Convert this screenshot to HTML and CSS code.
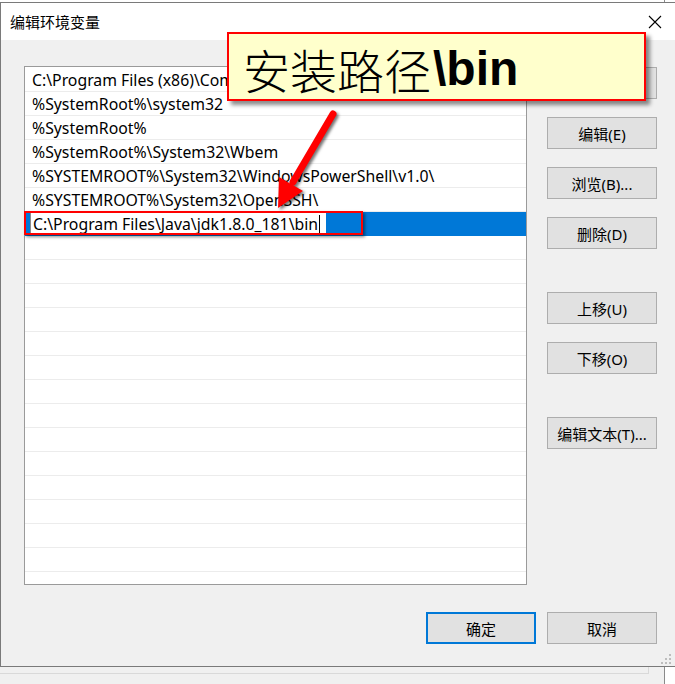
FILE: index.html
```html
<!DOCTYPE html>
<html lang="zh-CN">
<head>
<meta charset="utf-8">
<title>编辑环境变量</title>
<link rel="stylesheet" href="styles.css">
</head>
<body>
<div class="screen">
  <div class="topstrip"><div class="topstrip-gap"></div><div class="topstrip-line"></div></div>
  <div class="dialog">
    <div class="titlebar">
      <span class="title">编辑环境变量</span>
      <svg class="close" width="14" height="14" viewBox="0 0 14 14"><path d="M1 1 L13 13 M13 1 L1 13" stroke="#000" stroke-width="1.1" fill="none"/></svg>
    </div>
    <div class="body">
      <div class="main">
        <div class="list">
          <div class="row">C:\Program Files (x86)\Common Files\Oracle\Java\javapath</div>
          <div class="row">%SystemRoot%\system32</div>
          <div class="row">%SystemRoot%</div>
          <div class="row">%SystemRoot%\System32\Wbem</div>
          <div class="row">%SYSTEMROOT%\System32\WindowsPowerShell\v1.0\</div>
          <div class="row">%SYSTEMROOT%\System32\OpenSSH\</div>
          <div class="row selected"><div class="editbox"><span class="edittext">C:\Program Files\Java\jdk1.8.0_181\bin</span><span class="caret"></span></div></div>
          <div class="row"></div><div class="row"></div><div class="row"></div><div class="row"></div>
          <div class="row"></div><div class="row"></div><div class="row"></div><div class="row"></div>
          <div class="row"></div><div class="row"></div><div class="row"></div><div class="row"></div>
          <div class="row"></div><div class="row"></div><div class="row"></div>
        </div>
        <div class="side">
          <div class="btn">新建(N)</div>
          <div class="btn">编辑(E)</div>
          <div class="btn">浏览(B)...</div>
          <div class="btn">删除(D)</div>
          <div class="btn spaced">上移(U)</div>
          <div class="btn">下移(O)</div>
          <div class="btn spaced">编辑文本(T)...</div>
        </div>
      </div>
      <div class="footer">
        <div class="btn default">确定</div>
        <div class="btn">取消</div>
      </div>
    </div>
    <svg class="grip" width="12" height="12" viewBox="0 0 12 12">
      <rect x="9" y="0" width="2" height="2" fill="#bdbdbd"/>
      <rect x="5" y="4" width="2" height="2" fill="#bdbdbd"/>
      <rect x="9" y="4" width="2" height="2" fill="#bdbdbd"/>
      <rect x="1" y="8" width="2" height="2" fill="#bdbdbd"/>
      <rect x="5" y="8" width="2" height="2" fill="#bdbdbd"/>
      <rect x="9" y="8" width="2" height="2" fill="#bdbdbd"/>
    </svg>
  </div>
  <div class="below">
    <div class="below-left"><div class="below-inner"></div></div>
    <div class="below-line"></div>
    <div class="below-white"></div>
  </div>

  <div class="callout"><span class="callout-cjk">安装路径</span><span class="callout-latin">\bin</span></div>
  <div class="editmark"></div>
  <svg class="arrow" width="100" height="120" viewBox="260 100 100 120">
    <g class="arrow-g">
      <line x1="333" y1="114" x2="293" y2="182" stroke="#ff0000" stroke-width="7" stroke-linecap="round"/>
      <polygon points="278,208 279,177 303,191" fill="#ff0000"/>
    </g>
  </svg>
</div>
</body>
</html>
```

FILE: styles.css
```css
* { box-sizing: border-box; }
html, body { margin: 0; padding: 0; }
body {
  background: #f0f0f0;
  font-family: "Noto Sans", "Noto Sans CJK SC", sans-serif;
  font-size: 15px;
  color: #000;
}
.screen {
  position: relative;
  width: 675px;
  height: 684px;
  overflow: hidden;
  background: #f0f0f0;
}
.topstrip {
  display: flex;
  height: 2px;
  background: #fff;
}
.topstrip-gap { width: 664px; }
.topstrip-line { width: 1px; background: #8a8a8a; }

.dialog {
  position: relative;
  width: 675px;
  height: 665px;
  border-top: 1px solid #7a7a7a;
  border-left: 1px solid #7a7a7a;
  border-bottom: 1px solid #7a7a7a;
  display: flex;
  flex-direction: column;
}
.titlebar {
  height: 37px;
  background: #fff;
  display: flex;
  align-items: center;
  justify-content: space-between;
  padding: 0 13px 0 9px;
}
.title {
  font-family: "Noto Sans CJK SC", sans-serif;
  font-size: 15px;
}
.close { display: block; margin-top: 1px; }

.body {
  flex: 1;
  background: #f0f0f0;
  padding: 26px 18px 22px 23px;
  display: flex;
  flex-direction: column;
}
.main {
  display: flex;
  gap: 20px;
  height: 519px;
}
.list {
  width: 503px;
  height: 519px;
  border: 1px solid #9a9a9a;
  background: #fff;
  overflow: hidden;
  padding-top: 1px;
}
.row {
  height: 24px;
  border-bottom: 1px solid #ececec;
  padding: 1px 0 0 7px;
  line-height: 22px;
  font-size: 15.8px;
  white-space: nowrap;
  overflow: hidden;
}
.row.selected {
  background: #0078d7;
  padding: 0 0 0 5px;
  border-bottom-color: #0078d7;
}
.editbox {
  width: 296px;
  height: 23px;
  background: #fff;
  border-left: 1px solid #8a8a8a;
  padding: 1px 0 0 2px;
  line-height: 22px;
  overflow: hidden;
  display: flex;
  align-items: flex-start;
}
.edittext { white-space: nowrap; }
.caret {
  width: 1px;
  height: 18px;
  margin-top: 2px;
  margin-left: 1px;
  background: #000;
}

.side {
  width: 110px;
  padding-top: 1px;
  display: flex;
  flex-direction: column;
  gap: 18px;
}
.btn {
  width: 110px;
  height: 32px;
  background: #e1e1e1;
  border: 1px solid #adadad;
  display: flex;
  align-items: center;
  justify-content: center;
  font-size: 15px;
  white-space: nowrap;
}
.btn.spaced { margin-top: 25px; }
.btn.default { border: 2px solid #0078d7; }

.footer {
  margin-top: 27px;
  display: flex;
  justify-content: flex-end;
  gap: 11px;
}

.grip {
  position: absolute;
  right: 3px;
  bottom: 0px;
}

.below {
  display: flex;
  height: 17px;
}
.below-left { width: 664px; }
.below-inner {
  width: 649px;
  height: 7px;
  border-right: 1px solid #d9d9d9;
  border-bottom: 1px solid #d9d9d9;
}
.below-line { width: 1px; background: #8a8a8a; }
.below-white { flex: 1; background: #fff; }

.callout {
  position: absolute;
  left: 227px;
  top: 32px;
  width: 419px;
  height: 69px;
  background: #ffffcc;
  border: 2px solid #ff0000;
  box-shadow: 4px 4px 4px rgba(0, 0, 0, 0.45);
  display: flex;
  align-items: center;
  padding: 4px 0 0 14px;
  white-space: nowrap;
}
.callout-cjk {
  font-family: "Noto Sans CJK SC", sans-serif;
  font-weight: 300;
  font-size: 47px;
  line-height: 1;
}
.callout-latin {
  font-family: "Liberation Sans", Arial, sans-serif;
  font-weight: bold;
  font-size: 48px;
  line-height: 1;
  margin-left: 2px;
}
.editmark {
  position: absolute;
  left: 24px;
  top: 211px;
  width: 339px;
  height: 24px;
  border: 2px solid #ff0000;
  box-shadow: 2px 2px 3px rgba(0, 0, 0, 0.45);
}
.arrow {
  position: absolute;
  left: 260px;
  top: 100px;
  overflow: visible;
}
.arrow-g { filter: drop-shadow(2px 2px 1.5px rgba(0, 0, 0, 0.55)); }
```
